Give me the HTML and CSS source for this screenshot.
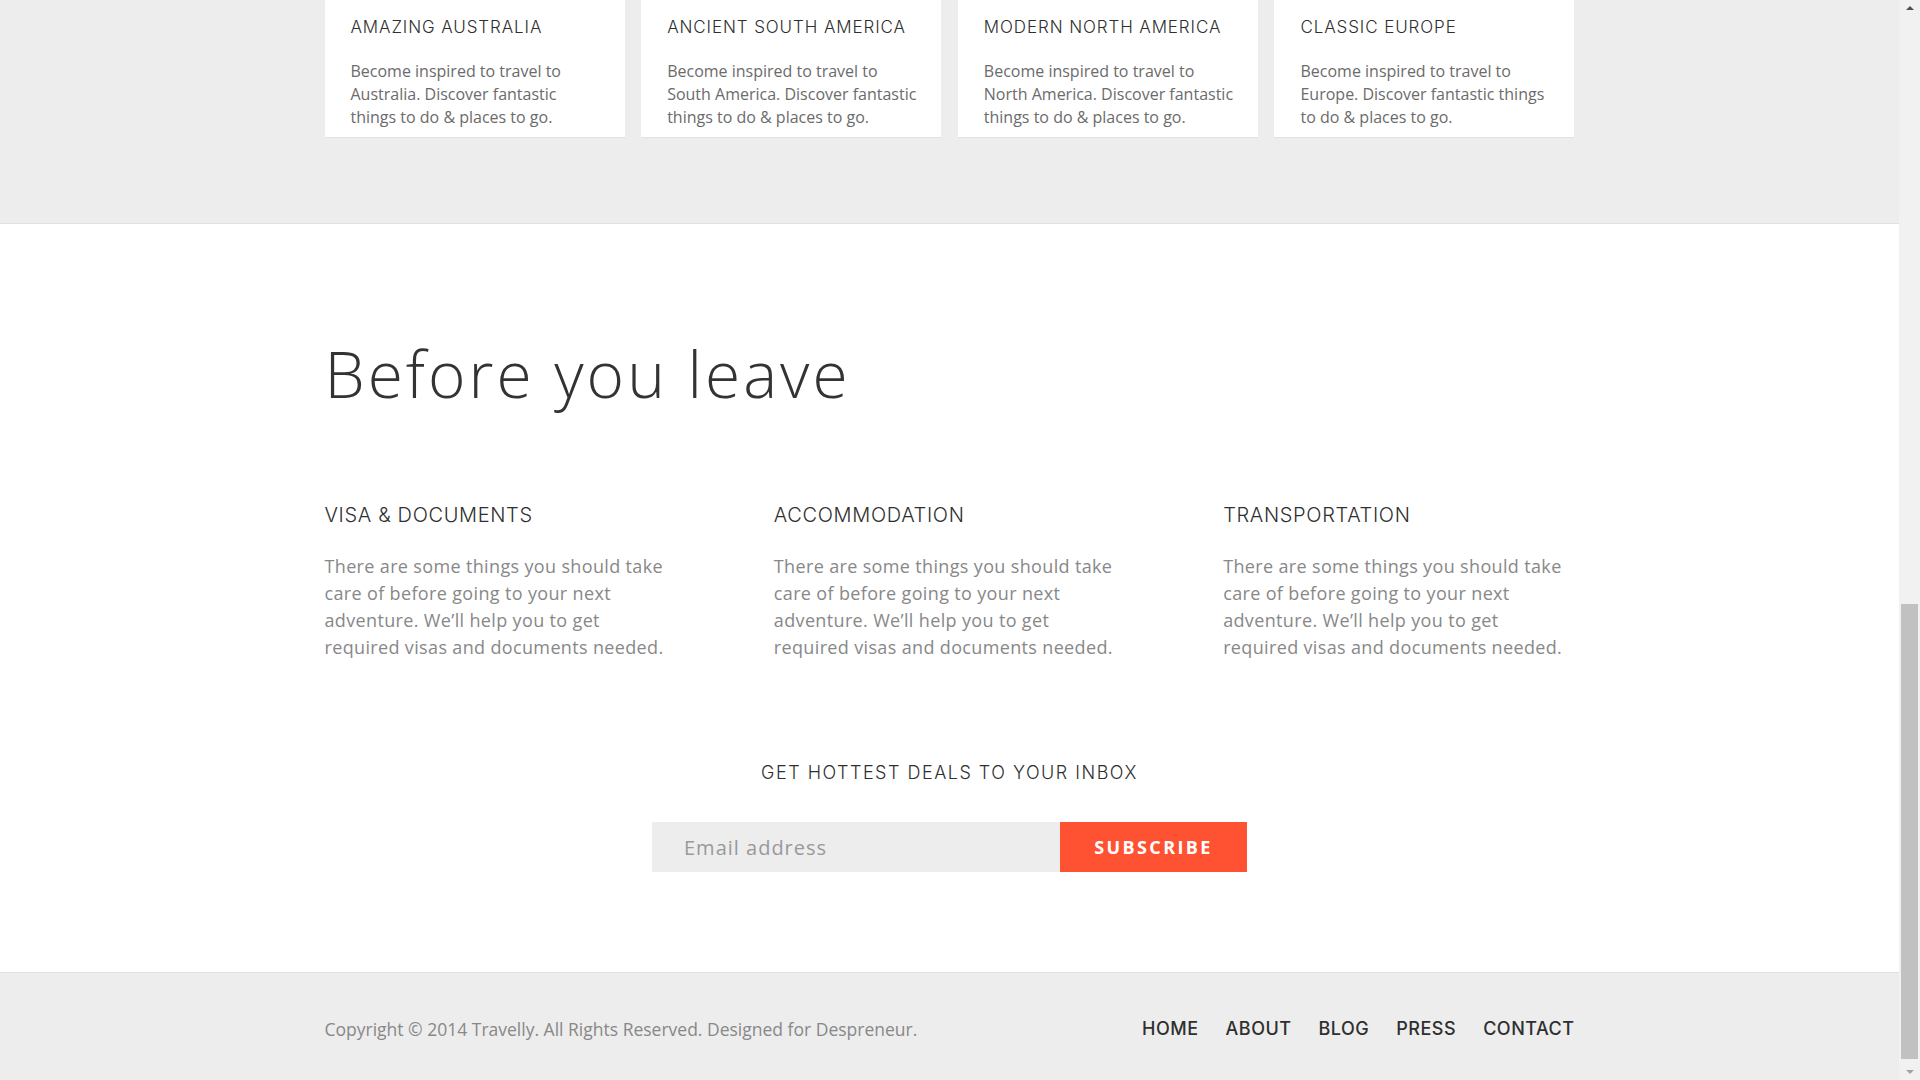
FILE: index.html
```html
<!DOCTYPE html>
<html lang="en">
<head>
<meta charset="utf-8">
<title>Travelly</title>
<link rel="stylesheet" href="styles.css">
</head>
<body>
<div class="viewport">
  <div class="page">
    <section class="destinations">
      <div class="container cards">
        <article class="card">
          <h3 class="card-title">AMAZING AUSTRALIA</h3>
          <p class="card-text">Become inspired to travel to Australia. Discover fantastic things to do &amp; places to go.</p>
        </article>
        <article class="card">
          <h3 class="card-title">ANCIENT SOUTH AMERICA</h3>
          <p class="card-text">Become inspired to travel to South America. Discover fantastic things to do &amp; places to go.</p>
        </article>
        <article class="card">
          <h3 class="card-title">MODERN NORTH AMERICA</h3>
          <p class="card-text">Become inspired to travel to North America. Discover fantastic things to do &amp; places to go.</p>
        </article>
        <article class="card">
          <h3 class="card-title">CLASSIC EUROPE</h3>
          <p class="card-text">Become inspired to travel to Europe. Discover fantastic things to do &amp; places to go.</p>
        </article>
      </div>
    </section>

    <section class="leave">
      <div class="container">
        <h2 class="leave-title">Before you leave</h2>
        <div class="tips">
          <div class="tip">
            <h4 class="tip-title">VISA &amp; DOCUMENTS</h4>
            <p class="tip-text">There are some things you should take care of before going to your next adventure. We’ll help you to get required visas and documents needed.</p>
          </div>
          <div class="tip">
            <h4 class="tip-title">ACCOMMODATION</h4>
            <p class="tip-text">There are some things you should take care of before going to your next adventure. We’ll help you to get required visas and documents needed.</p>
          </div>
          <div class="tip">
            <h4 class="tip-title">TRANSPORTATION</h4>
            <p class="tip-text">There are some things you should take care of before going to your next adventure. We’ll help you to get required visas and documents needed.</p>
          </div>
        </div>
        <div class="newsletter">
          <h4 class="newsletter-title">GET HOTTEST DEALS TO YOUR INBOX</h4>
          <form class="subscribe">
            <input class="email" type="text" placeholder="Email address">
            <button class="subscribe-btn" type="button">SUBSCRIBE</button>
          </form>
        </div>
      </div>
    </section>

    <footer class="footer">
      <div class="container footer-inner">
        <p class="copyright">Copyright © 2014 Travelly. All Rights Reserved. Designed for Despreneur.</p>
        <nav class="footer-nav">
          <a href="#">HOME</a>
          <a href="#">ABOUT</a>
          <a href="#">BLOG</a>
          <a href="#">PRESS</a>
          <a href="#">CONTACT</a>
        </nav>
      </div>
    </footer>
  </div>
  <div class="scrollbar">
    <span class="arrow-up"></span>
    <div class="track"><div class="thumb"></div></div>
    <span class="arrow-down"></span>
  </div>
</div>
</body>
</html>
```

FILE: styles.css
```css
* { box-sizing: border-box; }
html, body { margin: 0; padding: 0; }
body {
  font-family: "Open Sans", "Liberation Sans", sans-serif;
  color: #333;
  background: #fff;
  overflow: hidden;
}
.viewport {
  display: flex;
  width: 1920px;
  height: 1080px;
  overflow: hidden;
}
.page {
  flex: 1;
  min-width: 0;
}
.container {
  width: 1250px;
  margin: 0 auto;
}

/* destinations */
.destinations {
  background: #ededed;
  border-bottom: 1px solid #e1e1e1;
  height: 224px;
}
.cards {
  display: grid;
  grid-template-columns: repeat(4, 300px);
  justify-content: space-between;
}
.card {
  background: #fff;
  border-bottom: 1px solid #e2e2e2;
  height: 138px;
  padding: 15px 22px 0 26px;
}
.card-title {
  margin: 0;
  font-family: "Inter", sans-serif;
  font-weight: 300;
  font-size: 17px;
  letter-spacing: 0.9px;
  line-height: 24px;
  color: #2f2f2f;
}
.card-text {
  margin: 21px 0 0;
  font-size: 16px;
  line-height: 23px;
  color: #6b6b6b;
}

/* before you leave */
.leave {
  padding-top: 110px;
  height: 748px;
}
.leave-title {
  margin: 0;
  font-weight: 300;
  font-size: 64px;
  letter-spacing: 3px;
  line-height: 80px;
  color: #333;
}
.tips {
  display: grid;
  grid-template-columns: repeat(3, 1fr);
  column-gap: 98px;
  margin-top: 88px;
}
.tip-title {
  margin: 0;
  font-family: "Inter", sans-serif;
  font-weight: 300;
  font-size: 20px;
  letter-spacing: 0.65px;
  line-height: 26px;
  color: #2f2f2f;
}
.tip-text {
  margin: 25px 0 0;
  font-size: 18px;
  letter-spacing: 0.35px;
  line-height: 27px;
  color: #888;
  max-width: 345px;
}
.newsletter {
  margin-top: 100px;
  text-align: center;
}
.newsletter-title {
  margin: 0;
  font-family: "Inter", sans-serif;
  font-weight: 300;
  font-size: 18px;
  letter-spacing: 1.5px;
  line-height: 24px;
  color: #2f2f2f;
}
.subscribe {
  display: flex;
  justify-content: center;
  margin-top: 37px;
}
.email {
  width: 408px;
  height: 50px;
  border: 0;
  background: #ededed;
  padding: 0 32px;
  font-family: "Open Sans", sans-serif;
  font-size: 20px;
  letter-spacing: 1px;
  color: #555;
  outline: none;
}
.email::placeholder { color: #999; }
.subscribe-btn {
  width: 187px;
  height: 50px;
  border: 0;
  background: #ff5233;
  color: #fff;
  font-family: "Open Sans", sans-serif;
  font-weight: 700;
  font-size: 18px;
  letter-spacing: 2.4px;
  cursor: pointer;
}

/* footer */
.footer {
  background: #ededed;
  border-top: 1px solid #e1e1e1;
  height: 200px;
}
.footer-inner {
  display: flex;
  justify-content: space-between;
  align-items: center;
  padding-top: 43px;
}
.copyright {
  margin: 0;
  font-size: 17.5px;
  line-height: 26px;
  color: #888;
}
.footer-nav {
  display: flex;
  gap: 27px;
}
.footer-nav a {
  font-family: "Inter", sans-serif;
  font-weight: 500;
  font-size: 18px;
  letter-spacing: 0.5px;
  line-height: 26px;
  color: #2f2f2f;
  text-decoration: none;
}

/* scrollbar */
.scrollbar {
  width: 21px;
  flex: none;
  background: #f1f1f1;
  display: flex;
  flex-direction: column;
  align-items: center;
}
.track {
  flex: 1;
  width: 100%;
  position: relative;
}
.thumb {
  position: absolute;
  left: 2px;
  right: 2px;
  top: 588px;
  height: 455px;
  background: #c1c1c1;
}
.arrow-up, .arrow-down {
  width: 0;
  height: 0;
  border-left: 4px solid transparent;
  border-right: 4px solid transparent;
  margin: 6px 0;
}
.arrow-up { border-bottom: 4px solid #505050; }
.arrow-down { border-top: 4px solid #a3a3a3; }
```
